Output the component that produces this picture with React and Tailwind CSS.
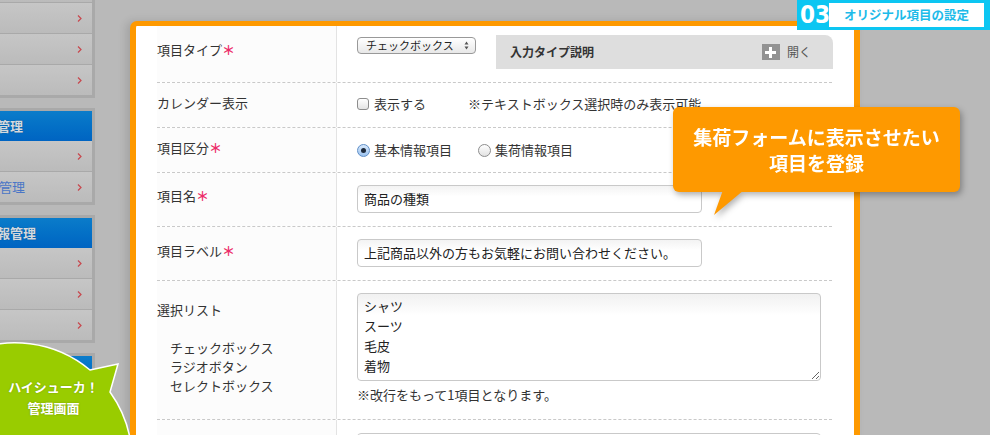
import React from "react";

function Arrow() {
  return (
    <svg width="5" height="7" viewBox="0 0 5 7">
      <path d="M1 0.5 L4 3.5 L1 6.5" fill="none" stroke="#c8474d" strokeWidth="1.2" />
    </svg>
  );
}

function NavRow({ children }) {
  return (
    <div className="h-[30px] flex items-center justify-between pr-[10px] bg-linear-to-b from-[#c6c6c6] to-[#bbbbbb]">
      <span className="-ml-[1px] text-[13px] text-[#4a76c6]">{children}</span>
      <Arrow />
    </div>
  );
}

function Sep() {
  return <div className="h-px bg-[#a9a9a9]" />;
}

function NavHead({ children, indent }) {
  return (
    <div className="h-[30px] flex items-center bg-linear-to-b from-[#0b7cca] to-[#0064c2]">
      <span className={`text-[13px] font-bold text-[#d3d9e0] [text-shadow:0_0_1px_rgba(0,0,0,0.4)] ${indent}`}>{children}</span>
    </div>
  );
}

function Sidebar() {
  return (
    <div className="w-[95px] shrink-0 flex flex-col gap-[10px]">
      <div className="-mt-[31px] border-[3px] border-l-0 border-[#a9a9a9]">
        <NavRow />
        <Sep />
        <NavRow />
        <Sep />
        <NavRow />
        <Sep />
        <NavRow />
      </div>
      <div className="border-[3px] border-l-0 border-[#a9a9a9]">
        <NavHead indent="-ml-[3px]">管理</NavHead>
        <NavRow />
        <Sep />
        <NavRow>管理</NavRow>
      </div>
      <div className="border-[3px] border-l-0 border-[#a9a9a9]">
        <NavHead indent="-ml-[16px]">情報管理</NavHead>
        <NavRow />
        <Sep />
        <NavRow />
        <Sep />
        <NavRow />
      </div>
      <div className="border-[3px] border-l-0 border-[#a9a9a9]">
        <NavHead indent="" />
        <NavRow />
      </div>
    </div>
  );
}

function Req() {
  return <span className="font-bold text-[#ec2c6a]">＊</span>;
}

function Row({ h, lpt, label, children, last }) {
  return (
    <div className={`flex ${h} ${last ? "" : "border-b border-dashed border-[#c9c9c9]"}`}>
      <div className={`w-[180px] shrink-0 border-r border-[#e3e3e3] bg-[#fcfcfc] ${lpt} text-[13px] leading-[18px]`}>
        {label}
      </div>
      <div className="flex-1 pl-[20px]">{children}</div>
    </div>
  );
}

function Checkbox() {
  return (
    <span className="block w-[12px] h-[12px] rounded-[3px] border border-[#8d8d8d] bg-linear-to-b from-white to-[#e4e4e4] shrink-0" />
  );
}

function Radio({ on }) {
  if (on) {
    return (
      <span className="w-[13px] h-[13px] rounded-full border border-[#5f8fc8] bg-linear-to-b from-[#d7e8fb] to-[#9cc3ef] flex items-center justify-center shrink-0">
        <span className="block w-[5px] h-[5px] rounded-full bg-[#1d2a3c]" />
      </span>
    );
  }
  return (
    <span className="block w-[13px] h-[13px] rounded-full border border-[#8d8d8d] bg-linear-to-b from-white to-[#e2e2e2] shrink-0" />
  );
}

function TextInput({ value, w }) {
  return (
    <div className={`${w} h-[28px] rounded-[4px] border border-[#c9c9c9] bg-linear-to-b from-[#f3f3f3] to-white to-[40%] flex items-center pl-[6px] text-[13px] text-[#222]`}>
      {value}
    </div>
  );
}

function Card() {
  return (
    <div className="ml-[35px] mt-[21px] w-[730px] h-[430px] shrink-0 bg-white border-[6px] border-t-[5px] border-b-0 border-[#fe9900] rounded-tl-[7px] rounded-tr-[3px] shadow-[-4px_0_8px_rgba(0,0,0,0.12)] pl-[21px] pr-[22px]">
      <Row h="h-[57px]" lpt="pt-[15px]" label={<>項目タイプ<Req /></>}>
        <div className="flex pt-[9px]">
          <div className="mt-[2px] w-[119px] h-[17px] rounded-[4px] border border-[#999] bg-linear-to-b from-white to-[#e8e8e8] flex items-center justify-between pl-[8px] pr-[6px] text-[11px] leading-none text-[#222]">
            <span>チェックボックス</span>
            <svg width="5" height="9" viewBox="0 0 5 9">
              <path d="M2.5 0.5 L4.5 3.5 L0.5 3.5 Z M2.5 8.5 L4.5 5.5 L0.5 5.5 Z" fill="#555" />
            </svg>
          </div>
          <div className="ml-[20px] w-[337px] h-[34px] rounded-tr-[8px] bg-[#dedede] flex items-center justify-between pl-[14px] pr-[22px]">
            <span className="text-[12px] font-bold text-[#333]">入力タイプ説明</span>
            <div className="flex items-center gap-[7px]">
              <span className="w-[18px] h-[16px] bg-[#929292] flex items-center justify-center">
                <svg width="11" height="11" viewBox="0 0 11 11">
                  <path d="M5.5 0 V11 M0 5.5 H11" stroke="white" strokeWidth="3" />
                </svg>
              </span>
              <span className="text-[12px] text-[#555]">開く</span>
            </div>
          </div>
        </div>
      </Row>
      <Row h="h-[45px]" lpt="pt-[11px]" label="カレンダー表示">
        <div className="flex items-center pt-[12px] text-[13px] leading-[18px]">
          <Checkbox />
          <span className="ml-[5px]">表示する</span>
          <span className="ml-[42px]">※テキストボックス選択時のみ表示可能</span>
        </div>
      </Row>
      <Row h="h-[45px]" lpt="pt-[11px]" label={<>項目区分<Req /></>}>
        <div className="flex items-center pt-[13px] text-[13px] leading-[18px]">
          <Radio on />
          <span className="ml-[4px]">基本情報項目</span>
          <span className="ml-[26px]"><Radio /></span>
          <span className="ml-[4px]">集荷情報項目</span>
        </div>
      </Row>
      <Row h="h-[54px]" lpt="pt-[14px]" label={<>項目名<Req /></>}>
        <div className="pt-[12px]">
          <TextInput w="w-[345px]" value="商品の種類" />
        </div>
      </Row>
      <Row h="h-[54px]" lpt="pt-[15px]" label={<>項目ラベル<Req /></>}>
        <div className="pt-[12px]">
          <TextInput w="w-[345px]" value="上記商品以外の方もお気軽にお問い合わせください。" />
        </div>
      </Row>
      <Row
        h="h-[139px]"
        lpt="pt-[20px]"
        label={
          <>
            <div>選択リスト</div>
            <div className="mt-[19px] pl-[13px] leading-[19px]">
              <div>チェックボックス</div>
              <div>ラジオボタン</div>
              <div>セレクトボックス</div>
            </div>
          </>
        }
      >
        <div className="pt-[12px]">
          <textarea
            defaultValue={"シャツ\nスーツ\n毛皮\n着物"}
            className="block w-[464px] h-[88px] rounded-[4px] border border-[#c9c9c9] bg-linear-to-b from-[#f1f1f1] to-white to-[25%] px-[6px] py-[2px] text-[13px] leading-[20px] text-[#222] overflow-hidden font-['Noto_Sans_CJK_JP',sans-serif]"
          />
          <div className="mt-[5px] text-[13px] leading-[18px]">※改行をもって1項目となります。</div>
        </div>
      </Row>
      <Row h="h-[40px]" lpt="pt-[15px]" label="" last>
        <div className="pt-[13px]">
          <div className="w-[464px] h-[28px] rounded-[4px] border border-[#c9c9c9]" />
        </div>
      </Row>
    </div>
  );
}

function Badge() {
  return (
    <div className="absolute top-0 right-0 w-[193px] h-[30px] bg-[#0cc6f2] flex items-center pl-[3px]">
      <span className="w-[27px] text-[24px] font-bold leading-none text-white font-['Liberation_Sans_Narrow','DejaVu_Sans_Condensed',sans-serif]">
        03
      </span>
      <div className="ml-[2px] w-[155px] h-[24px] bg-white flex items-center justify-center text-[12.5px] font-bold text-[#1dbbe9]">
        オリジナル項目の設定
      </div>
    </div>
  );
}

function Callout() {
  return (
    <div className="absolute left-[673px] top-[107px] w-[287px] h-[110px] drop-shadow-[2px_3px_3px_rgba(0,0,0,0.3)]">
      <svg className="absolute left-[40px] top-[83px]" width="32" height="26" viewBox="0 0 32 26">
        <polygon points="10,0 31,0 1,25" fill="#fe9900" />
      </svg>
      <div className="relative h-[85px] rounded-[6px] bg-[#fe9900] flex flex-col items-center justify-center text-[19px] leading-[26px] font-bold text-white">
        <span>集荷フォームに表示させたい</span>
        <span>項目を登録</span>
      </div>
    </div>
  );
}

function Bubble() {
  return (
    <>
      <svg className="absolute left-0 top-[330px]" width="140" height="105" viewBox="0 0 140 105">
        <path
          d="M90 40 L118 34 L110 62 A117 117 0 0 1 132 130 L-110 130 L-102 130 A117 117 0 0 1 90 40 Z"
          fill="#99cc00"
          stroke="white"
          strokeWidth="1.5"
        />
      </svg>
      <div className="absolute left-0 top-[376px] w-[107px] flex flex-col items-center text-[13px] leading-[21px] font-bold text-white [text-shadow:0_0_2px_rgba(0,0,0,0.25)]">
        <span>ハイシューカ！</span>
        <span>管理画面</span>
      </div>
    </>
  );
}

export default function App() {
  return (
    <div className="relative w-[990px] h-[435px] overflow-hidden bg-[#b9b9b9] text-[#333] font-['Noto_Sans_CJK_JP','Liberation_Sans',sans-serif]">
      <div className="flex items-start">
        <Sidebar />
        <Card />
      </div>
      <Badge />
      <Callout />
      <Bubble />
    </div>
  );
}
